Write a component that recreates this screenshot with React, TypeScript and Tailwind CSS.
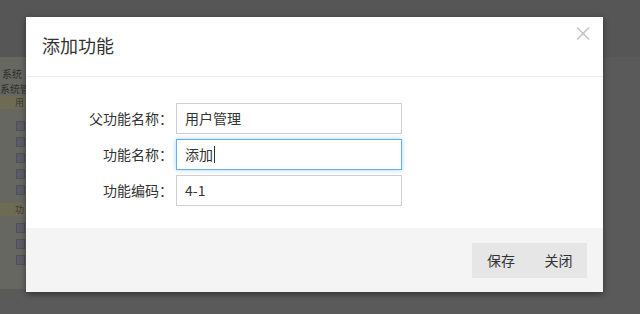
import type { ReactNode } from "react";

const font = { fontFamily: '"Noto Sans CJK SC", "Noto Sans", sans-serif' };

function TreeBox() {
  return (
    <div className="h-[16px] flex items-center pl-[16px]">
      <span className="w-[9px] h-[10px] bg-[#5b5c66] border border-[#4f5058]" />
    </div>
  );
}

function Backdrop() {
  return (
    <div className="flex flex-col h-full">
      <div className="h-[57px] bg-[#565656]" />
      <div className="flex flex-1">
        <div className="w-[300px] h-[232px] bg-[#676762] text-[#2f2f2f] pt-[9px] overflow-hidden">
          <div className="h-[15px] leading-[15px] text-[10px] pl-[2px] whitespace-nowrap">系统</div>
          <div className="h-[15px] leading-[15px] text-[10px] whitespace-nowrap">系统管理</div>
          <div className="h-[13px] leading-[13px] text-[9px] bg-[#6e6b55] pl-[15px] text-[#3a3a36]">用</div>
          <div className="h-[9px]" />
          <TreeBox />
          <TreeBox />
          <TreeBox />
          <TreeBox />
          <TreeBox />
          <div className="h-[13px] leading-[13px] text-[9px] bg-[#6e6b55] pl-[15px] mt-[5px] text-[#3a3a36]">功</div>
          <div className="h-[4px]" />
          <TreeBox />
          <TreeBox />
          <TreeBox />
        </div>
        <div className="flex-1 bg-[#5a5a5a]" />
      </div>
    </div>
  );
}

function Row({ label, children }: { label: string; children: ReactNode }) {
  return (
    <div className="grid grid-cols-[147px_226px] gap-[3px] items-center">
      <span className="text-right text-[14px] text-[#333]">{label}</span>
      {children}
    </div>
  );
}

export default function App() {
  return (
    <div className="relative w-[640px] h-[314px] overflow-hidden bg-[#5a5a5a]" style={font}>
      <Backdrop />

      <div className="absolute left-[26px] top-[17px] w-[577px] h-[275px] bg-white flex flex-col shadow-[0_2px_6px_rgba(0,0,0,0.45)]">
        <div className="h-[60px] flex items-center justify-between pl-4 pr-[10px] border-b border-[#ececec]">
          <span className="text-[18px] text-[#333] -mt-[2px]">添加功能</span>
          <span className="text-[20px] leading-none text-[#c4c4c4] -mt-[28px]">×</span>
        </div>

        <div className="flex-1 pt-[26px] flex flex-col gap-[5px]">
          <Row label="父功能名称：">
            <div className="h-[31px] border border-[#cfcfcf] flex items-center px-2 text-[14px] text-[#333]">
              用户管理
            </div>
          </Row>
          <Row label="功能名称：">
            <div className="h-[31px] border border-[#66afe9] shadow-[0_0_5px_rgba(102,175,233,0.55)] flex items-center px-2 text-[14px] text-[#333]">
              添加
              <span className="w-px h-[17px] bg-[#333] ml-[1px]" />
            </div>
          </Row>
          <Row label="功能编码：">
            <div className="h-[31px] border border-[#cfcfcf] flex items-center px-2 text-[14px] text-[#333]">
              4-1
            </div>
          </Row>
        </div>

        <div className="h-[64px] bg-[#f4f4f4] flex items-center justify-end pr-4">
          <div className="flex bg-[#e6e6e6]">
            <button className="h-[35px] w-[58px] text-[14px] text-[#333]">保存</button>
            <button className="h-[35px] w-[57px] text-[14px] text-[#333]">关闭</button>
          </div>
        </div>
      </div>
    </div>
  );
}
